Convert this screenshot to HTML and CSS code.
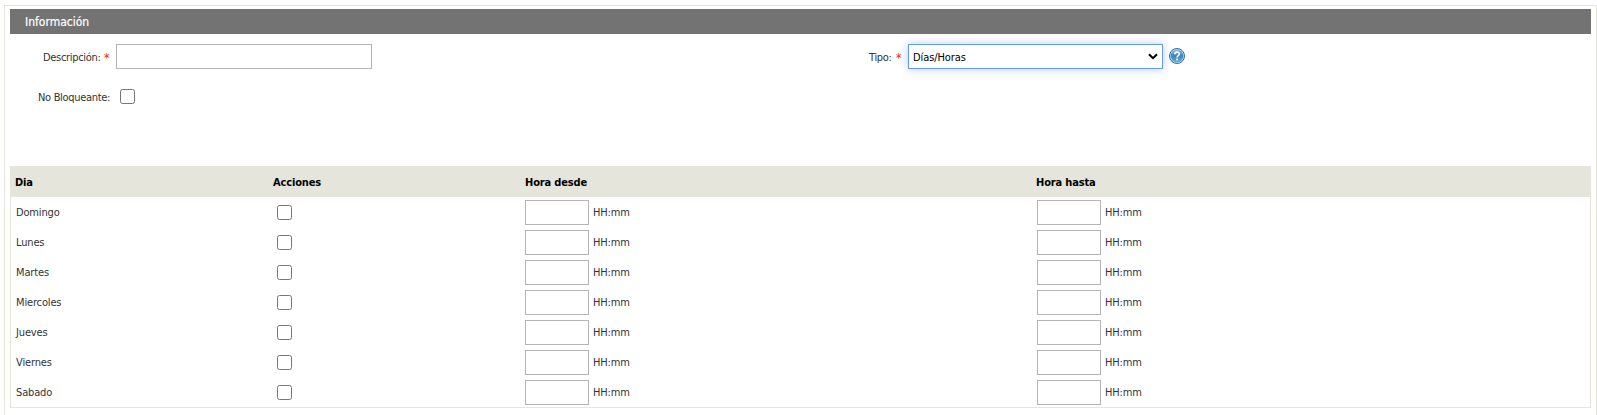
FILE: index.html
```html
<!DOCTYPE html>
<html lang="es">
<head>
<meta charset="utf-8">
<title>Información</title>
<link rel="stylesheet" href="styles.css">
</head>
<body>
<main class="panel">
<h1 class="title"><span>Información</span></h1>
<form class="fields">
<div class="field">
<label class="label desc" for="d">Descripción:</label><span class="req">*</span>
<input class="box wide" id="d" type="text">
</div>
<div class="field tipo">
<label class="label tip" for="t">Tipo:</label><span class="req">*</span>
<div class="box wide select" id="t" tabindex="0"><span class="value">Días/Horas</span>
<svg class="chevron" width="10" height="7" viewBox="0 0 10 7"><path d="M1 1.2 5 5.2 9 1.2" fill="none" stroke="#000" stroke-width="2"/></svg></div>
<svg class="help" width="16" height="16" viewBox="0 0 16 16">
<defs><linearGradient id="g" x1="0" y1="0" x2="0" y2="1"><stop offset="0" stop-color="#8bbbe0"/><stop offset=".5" stop-color="#3c84bd"/><stop offset="1" stop-color="#58b4e8"/></linearGradient></defs>
<circle cx="8" cy="8" r="7.5" fill="#b9d8ec" stroke="#326f9f"/><circle cx="8" cy="8" r="6.3" fill="url(#g)"/>
<path d="M5.8 6.2C5.8 3.5 10.3 3.5 10.3 6.1 10.3 7.7 8.1 7.7 8.1 9.5" fill="none" stroke="#fff" stroke-width="1.6"/><rect x="7.2" y="10.6" width="1.8" height="1.7" fill="#fff"/></svg>
</div>
<div class="field second">
<label class="label block" for="n">No Bloqueante:</label>
<input class="check" id="n" type="checkbox">
</div>
</form>
<section class="table">
<div class="row head"><b class="h1">Dia</b><b class="h2">Acciones</b><b class="h3">Hora desde</b><b class="h4">Hora hasta</b></div>
<div class="row"><span class="day">Domingo</span><input class="check" type="checkbox"><div class="time"><input class="box"><span class="fmt">HH:mm</span></div><div class="time"><input class="box"><span class="fmt">HH:mm</span></div></div>
<div class="row"><span class="day">Lunes</span><input class="check" type="checkbox"><div class="time"><input class="box"><span class="fmt">HH:mm</span></div><div class="time"><input class="box"><span class="fmt">HH:mm</span></div></div>
<div class="row"><span class="day">Martes</span><input class="check" type="checkbox"><div class="time"><input class="box"><span class="fmt">HH:mm</span></div><div class="time"><input class="box"><span class="fmt">HH:mm</span></div></div>
<div class="row"><span class="day">Miercoles</span><input class="check" type="checkbox"><div class="time"><input class="box"><span class="fmt">HH:mm</span></div><div class="time"><input class="box"><span class="fmt">HH:mm</span></div></div>
<div class="row"><span class="day">Jueves</span><input class="check" type="checkbox"><div class="time"><input class="box"><span class="fmt">HH:mm</span></div><div class="time"><input class="box"><span class="fmt">HH:mm</span></div></div>
<div class="row"><span class="day">Viernes</span><input class="check" type="checkbox"><div class="time"><input class="box"><span class="fmt">HH:mm</span></div><div class="time"><input class="box"><span class="fmt">HH:mm</span></div></div>
<div class="row"><span class="day">Sabado</span><input class="check" type="checkbox"><div class="time"><input class="box"><span class="fmt">HH:mm</span></div><div class="time"><input class="box"><span class="fmt">HH:mm</span></div></div>
</section>
</main>
</body>
</html>
```
FILE: styles.css
```css
* { box-sizing: border-box; }
body { margin: 0; padding: 5px 0 0 4px; height: 415px; overflow: hidden; background: #fff; color: #333; font: 11px/14px Tahoma, "DejaVu Sans Condensed", "Noto Sans", sans-serif; }
.panel { width: 1593px; height: 430px; border: 1px solid #e5e5dc; padding: 3px 5px; }
.title { margin: 0; height: 25px; padding-left: 15px; background: #737373; color: #fff; font-size: 12px; font-weight: 400; line-height: 26px; -webkit-text-stroke: .2px #fff; }
.fields { display: grid; grid-template-columns: 850px 1fr; grid-template-rows: 45px 35px; height: 132px; padding-top: 10px; align-content: start; }
.field { display: flex; height: 25px; align-items: center; }
.label { white-space: nowrap; padding-top: 2px; letter-spacing: -.32px; }
.desc { margin-left: 33px; width: 61px; }
.tip { margin-left: 9px; width: 27px; }
.req { width: 11px; color: #e8230c; font-size: 12px; padding-top: 2px; }
.desc + .req { width: 12px; }
.box { margin: 0; padding: 0; width: 64px; height: 25px; border: 1px solid #b4b4b4; background: #fff; }
.wide { width: 256px; }
.select { display: flex; align-items: center; justify-content: space-between; width: 255px; padding: 0 4px; margin-left: 1px; border-color: #669ae8; box-shadow: 0 0 8px rgba(90, 145, 235, .45); color: #000; }
.value { padding-top: 2px; letter-spacing: -.1px; }
.chevron { display: block; }
.help { display: block; margin: -1px 0 0 6px; }
.second { height: 15px; }
.block { margin-left: 28px; width: 82px; }
.check { appearance: none; margin: 0; width: 15px; height: 15px; border: 1px solid #767676; border-radius: 2.5px; background: #fff; }
.table { height: 242px; border: 1px solid #e5e5dc; border-top: 0; }
.row { display: grid; grid-template-columns: 266px 248px 512px 1fr; height: 30px; align-items: center; }
.head { height: 31px; margin: 0 -1px; padding-left: 1px; background: #e5e5dc; color: #000; }
.head b { padding-top: 2px; letter-spacing: -.15px; }
.h1 { margin-left: 4px; }
.h2 { margin-left: -4px; }
.day { margin-left: 5px; padding-top: 2px; letter-spacing: -.15px; }
.h4 { margin-left: -1px; }
.row .time { display: flex; align-items: center; }
.fmt { margin-left: 4px; padding-top: 2px; letter-spacing: -.15px; }
```
